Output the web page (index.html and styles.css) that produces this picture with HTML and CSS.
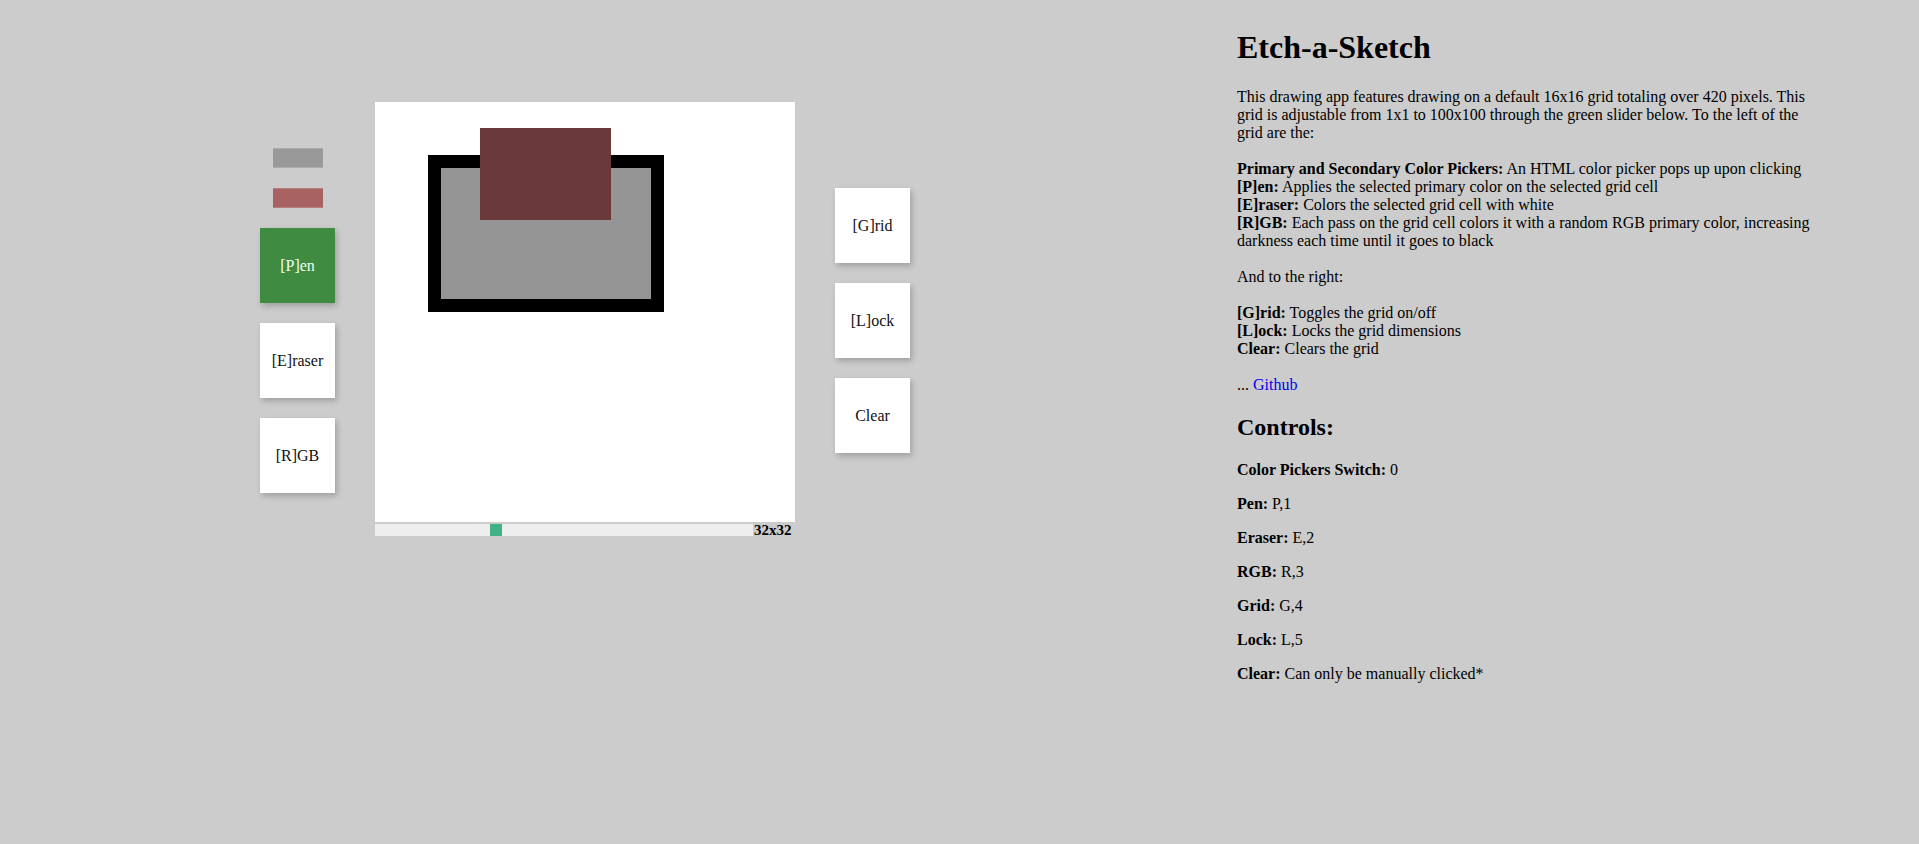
FILE: index.html
```html
<!DOCTYPE html>
<html lang="en">
<head>
<meta charset="utf-8">
<title>Etch-a-Sketch</title>
<link rel="stylesheet" href="styles.css">
</head>
<body>
<main class="workspace">
  <div class="tools">
    <div class="swatch swatch-primary"></div>
    <div class="swatch swatch-secondary"></div>
    <button class="tool tool-active">[P]en</button>
    <button class="tool">[E]raser</button>
    <button class="tool">[R]GB</button>
  </div>
  <div class="board">
    <div class="canvas">
      <div class="shape shape-frame"></div>
      <div class="shape shape-fill"></div>
      <div class="shape shape-top"></div>
    </div>
    <div class="slider-row">
      <input class="slider" type="range" min="1" max="100" value="32">
      <span class="size-label">32x32</span>
    </div>
  </div>
  <div class="tools">
    <button class="tool">[G]rid</button>
    <button class="tool">[L]ock</button>
    <button class="tool">Clear</button>
  </div>
</main>
<section class="info">
  <h1>Etch-a-Sketch</h1>
  <p>This drawing app features drawing on a default 16x16 grid totaling over 420 pixels. This grid is adjustable from 1x1 to 100x100 through the green slider below. To the left of the grid are the:<br><br><b>Primary and Secondary Color Pickers:</b> An HTML color picker pops up upon clicking<br><b>[P]en:</b> Applies the selected primary color on the selected grid cell<br><b>[E]raser:</b> Colors the selected grid cell with white<br><b>[R]GB:</b> Each pass on the grid cell colors it with a random RGB primary color, increasing darkness each time until it goes to black<br><br>And to the right:<br><br><b>[G]rid:</b> Toggles the grid on/off<br><b>[L]ock:</b> Locks the grid dimensions<br><b>Clear:</b> Clears the grid<br><br>... <a class="repo-link" href="#">Github</a></p>
  <h2>Controls:</h2>
  <p><b>Color Pickers Switch:</b> 0</p>
  <p><b>Pen:</b> P,1</p>
  <p><b>Eraser:</b> E,2</p>
  <p><b>RGB:</b> R,3</p>
  <p><b>Grid:</b> G,4</p>
  <p><b>Lock:</b> L,5</p>
  <p><b>Clear:</b> Can only be manually clicked*</p>
</section>
</body>
</html>
```
FILE: styles.css
```css
html, body {
  background: #cccccc;
}
body {
  margin: 8px;
  font-family: "Liberation Serif", "Times New Roman", serif;
  font-size: 16px;
  color: #000;
  display: flex;
  align-items: flex-start;
}
.workspace {
  flex: none;
  width: 1154px;
  padding-top: 94px;
  display: flex;
  justify-content: center;
  align-items: center;
  gap: 40px;
}
.tools {
  width: 75px;
  display: flex;
  flex-direction: column;
  align-items: center;
  gap: 20px;
}
.swatch {
  width: 50px;
  height: 18px;
  border-top: 1px solid rgba(255, 255, 255, 0.18);
  border-bottom: 1px solid rgba(255, 255, 255, 0.18);
}
.swatch-primary {
  background: #999999;
}
.swatch-secondary {
  background: #a86262;
}
.tool {
  width: 75px;
  height: 75px;
  border: none;
  padding: 0;
  background: #ffffff;
  color: #111;
  font-family: "Liberation Serif", "Times New Roman", serif;
  font-size: 16px;
  box-shadow: 2px 3px 6px rgba(0, 0, 0, 0.22);
}
.tool-active {
  background: #3e8b41;
  color: #f0fff0;
}
.board {
  width: 420px;
  display: flex;
  flex-direction: column;
}
.canvas {
  width: 420px;
  height: 420px;
  background: #ffffff;
  display: grid;
  grid-template-columns: repeat(32, 1fr);
  grid-template-rows: repeat(32, 1fr);
}
.shape-frame {
  grid-column: 5 / 23;
  grid-row: 5 / 17;
  background: #000000;
}
.shape-fill {
  grid-column: 6 / 22;
  grid-row: 6 / 16;
  background: #959595;
}
.shape-top {
  grid-column: 9 / 19;
  grid-row: 3 / 10;
  background: #6a3a3a;
}
.slider-row {
  margin-top: 2px;
  height: 15px;
  display: flex;
  align-items: flex-start;
}
.slider {
  -webkit-appearance: none;
  appearance: none;
  width: 378px;
  height: 12px;
  margin: 0;
  background: #eeeeee;
  outline: none;
}
.slider::-webkit-slider-thumb {
  -webkit-appearance: none;
  appearance: none;
  width: 12px;
  height: 12px;
  border: none;
  background: #40b385;
}
.slider::-moz-range-thumb {
  width: 12px;
  height: 12px;
  border: none;
  border-radius: 0;
  background: #40b385;
}
.size-label {
  padding-left: 1px;
  font-weight: bold;
  font-size: 15px;
  line-height: 12px;
}
.info {
  margin-left: 75px;
  width: 585px;
}
.repo-link {
  color: #0000ee;
  text-decoration: none;
}
```
